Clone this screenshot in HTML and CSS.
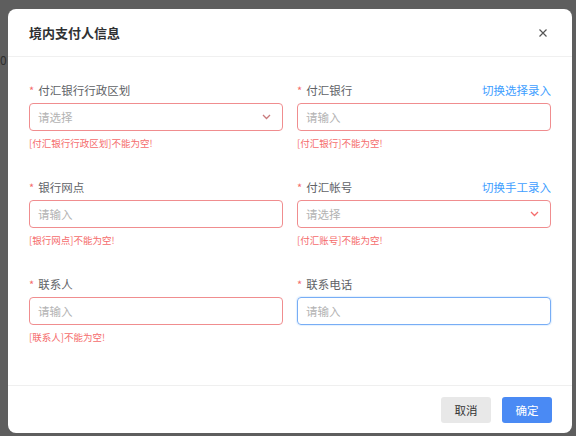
FILE: index.html
```html
<!DOCTYPE html>
<html lang="zh">
<head>
<meta charset="utf-8">
<title>境内支付人信息</title>
<link rel="stylesheet" href="styles.css">
</head>
<body>
<div class="backdrop">
  <div class="bg-num">0</div>
  <div class="dialog">
    <div class="dialog-header">
      <span class="dialog-title">境内支付人信息</span>
      <span class="close" aria-label="close">
        <svg width="8" height="8" viewBox="0 0 8 8"><path d="M0.5 0.5 L7.5 7.5 M7.5 0.5 L0.5 7.5" stroke="#555" stroke-width="1.2" fill="none"/></svg>
      </span>
    </div>
    <div class="dialog-body">
      <div class="form-grid">
        <div class="item">
          <div class="label-row"><span class="label"><i class="req">*</i>付汇银行行政区划</span></div>
          <div class="input error select"><span class="ph">请选择</span>
            <svg class="chev" width="9" height="6" viewBox="0 0 9 6"><path d="M1 1 L4.5 4.5 L8 1" stroke="#c97a7c" stroke-width="1.3" fill="none"/></svg>
          </div>
          <div class="err">[付汇银行行政区划]不能为空!</div>
        </div>
        <div class="item">
          <div class="label-row"><span class="label"><i class="req">*</i>付汇银行</span><a class="link">切换选择录入</a></div>
          <div class="input error"><span class="ph">请输入</span></div>
          <div class="err">[付汇银行]不能为空!</div>
        </div>
        <div class="item">
          <div class="label-row"><span class="label"><i class="req">*</i>银行网点</span></div>
          <div class="input error"><span class="ph">请输入</span></div>
          <div class="err">[银行网点]不能为空!</div>
        </div>
        <div class="item">
          <div class="label-row"><span class="label"><i class="req">*</i>付汇帐号</span><a class="link">切换手工录入</a></div>
          <div class="input error select"><span class="ph">请选择</span>
            <svg class="chev" width="9" height="6" viewBox="0 0 9 6"><path d="M1 1 L4.5 4.5 L8 1" stroke="#f56c6c" stroke-width="1.3" fill="none"/></svg>
          </div>
          <div class="err">[付汇账号]不能为空!</div>
        </div>
        <div class="item">
          <div class="label-row"><span class="label"><i class="req">*</i>联系人</span></div>
          <div class="input error"><span class="ph">请输入</span></div>
          <div class="err">[联系人]不能为空!</div>
        </div>
        <div class="item">
          <div class="label-row"><span class="label"><i class="req">*</i>联系电话</span></div>
          <div class="input focus"><span class="ph">请输入</span></div>
        </div>
      </div>
    </div>
    <div class="dialog-footer">
      <button class="btn btn-cancel">取消</button>
      <button class="btn btn-primary">确定</button>
    </div>
  </div>
</div>
</body>
</html>
```

FILE: styles.css
```css
* { box-sizing: border-box; }
html, body {
  margin: 0;
  padding: 0;
  width: 576px;
  height: 436px;
  overflow: hidden;
  font-family: "Noto Sans CJK SC", "Noto Sans", "Liberation Sans", sans-serif;
}
.backdrop {
  position: relative;
  width: 576px;
  height: 436px;
  background: #5e5e5e;
  padding: 9px 4px 3px 8px;
}
.bg-num {
  position: absolute;
  left: 0;
  top: 51px;
  font-size: 12px;
  color: #2e2e2e;
}
.dialog {
  position: relative;
  width: 564px;
  height: 424px;
  background: #fff;
  border-radius: 8px;
  display: flex;
  flex-direction: column;
}
.dialog-header {
  height: 48px;
  flex: none;
  display: flex;
  align-items: center;
  justify-content: space-between;
  padding: 0 25px 0 21px;
  border-bottom: 1px solid #f0f0f0;
}
.dialog-title {
  font-size: 13px;
  font-weight: 700;
  color: #303133;
}
.close {
  display: flex;
  width: 8px;
  height: 8px;
}
.dialog-body {
  height: 329px;
  flex: none;
  padding: 23px 20px 0 21px;
  border-bottom: 1px solid #efefef;
}
.form-grid {
  display: grid;
  grid-template-columns: 254px 254px;
  column-gap: 14px;
}
.item {
  display: flex;
  flex-direction: column;
  height: 97px;
}
.label-row {
  height: 20px;
  display: flex;
  align-items: center;
  justify-content: space-between;
  font-size: 11.5px;
  line-height: 20px;
}
.label {
  color: #606266;
}
.req {
  font-style: normal;
  color: #f56c6c;
  margin-right: 4px;
  font-size: 11px;
}
.link {
  color: #409eff;
  font-size: 11.5px;
}
.input {
  margin-top: 3px;
  height: 28px;
  border: 1px solid #dcdfe6;
  border-radius: 4px;
  display: flex;
  align-items: center;
  justify-content: space-between;
  padding: 0 11px 0 8px;
  font-size: 11.5px;
}
.input.error { border-color: #f08d8f; }
.input.focus { border-color: #78adf5; box-shadow: 0 0 1px 1px rgba(64, 158, 255, 0.15); }
.ph { color: #b3b3b3; }
.chev { display: block; }
.err {
  margin-top: 4px;
  font-size: 9.5px;
  line-height: 16px;
  color: #f56c6c;
}
.dialog-footer {
  flex: 1;
  display: flex;
  align-items: center;
  justify-content: flex-end;
  gap: 11px;
  padding: 0 20px 0 0;
}
.btn {
  width: 50px;
  height: 26px;
  border: none;
  border-radius: 3px;
  font-family: inherit;
  font-size: 11.5px;
  padding: 0;
}
.btn-cancel { background: #e8e8e8; color: #333; }
.btn-primary { background: #4a8af4; color: #fff; }
```
